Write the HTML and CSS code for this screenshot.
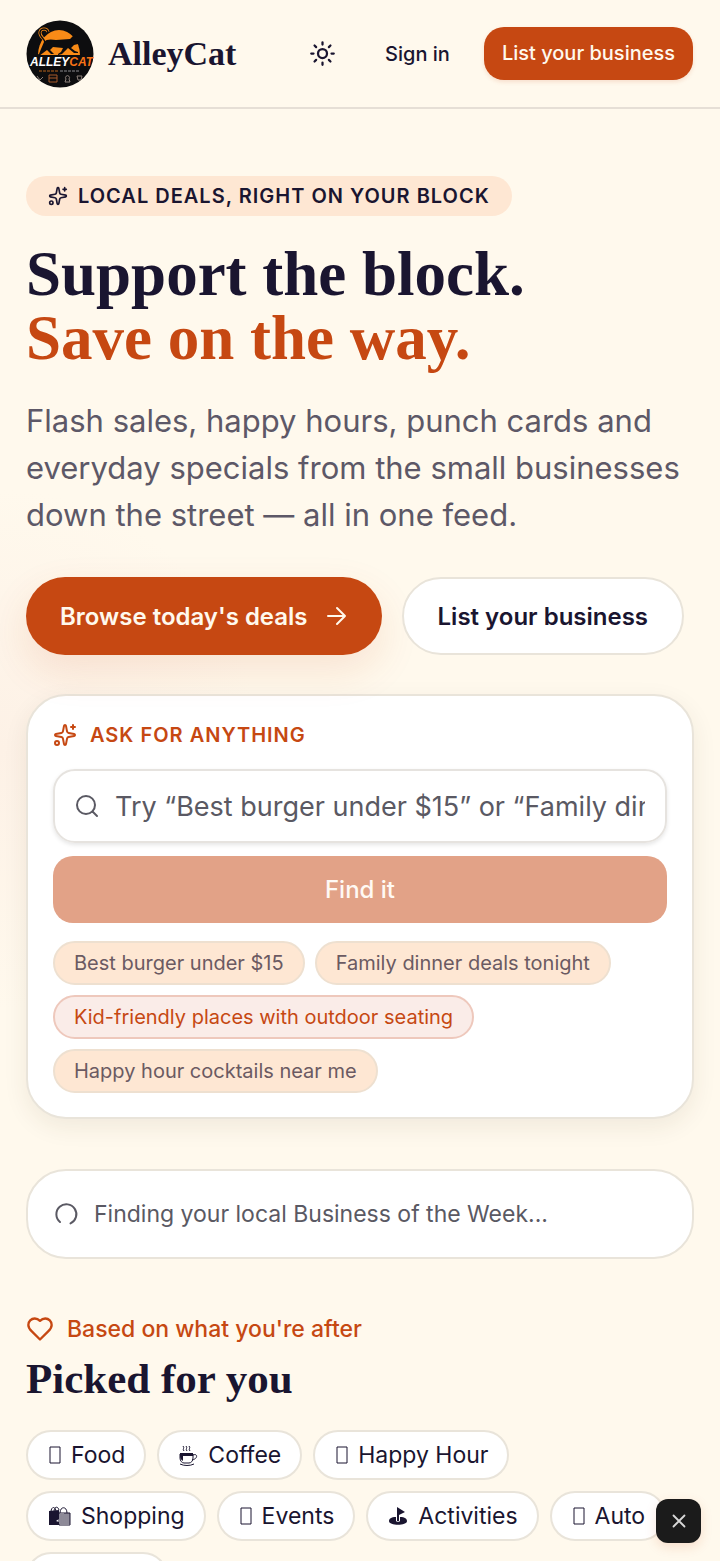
FILE: index.html
```
<!DOCTYPE html>
<html lang="en">
<head>
    <meta charset="UTF-8">
    <meta name="viewport" content="width=device-width, initial-scale=1.0">
    <title>AlleyCat</title>
    <link rel="stylesheet" href="styles.css">
</head>
<body>
    <header class="header">
        <a class="brand" href="#">
            <svg class="brand-logo" viewBox="0 0 68 68" role="img" aria-label="AlleyCat logo">
                <circle cx="34" cy="34" r="33.5" fill="#0d0d0f"/>
                <path d="M12 35a21 25 0 0 1 42 0z" fill="#f98b17"/>
                <path d="M22 12c-1-4-7-4-8 0-1 5 5 6 6 11" fill="none" stroke="#f98b17" stroke-width="3"/>
                <path d="M22 12c-1-4-7-4-8 0-1 5 5 6 5 11" fill="none" stroke="#0d0d0f" stroke-width="1.500" stroke-linecap="round"/>
                <path d="M18 22c2-3 7-3 12-2 5 0 9-1 14-1l3-3 1-1 1 2 3-1v3l1 3-1 2-4 1-3 3 4 3 3 1v1h-4l-6-5-3 3-3 3-4 1v-1l3-2 2-4-10-1-3 3 4 4h-3l-4-4-4 3-4 3-4 1 1-2 3-1 2-5z" fill="#0d0d0f"/>
                <text x="4" y="46" class="logo-word"><tspan fill="#fff">ALLEY</tspan><tspan fill="#f97316">CAT</tspan></text>
                <path d="M13 51h20" stroke="#b8641c" stroke-dasharray="3 1"/>
                <path d="M34 51h20" stroke="#8b8b8f" stroke-dasharray="3 1"/>
                <path d="M11 56l3 4 3-3M39 62h5l-1-3a2 2 0 1 0-3 0zM51 56h5l-1 4h-3z" fill="none" stroke="#8d817b"/>
                <path d="M23 55h8v7h-8zM23 58h8" fill="none" stroke="#a85b2a"/>
            </svg>
            <span class="brand-name">AlleyCat</span>
        </a>
        <nav class="nav">
            <button class="theme-toggle" type="button" aria-label="Toggle theme">
                <svg class="icon" viewBox="0 0 24 24"><circle cx="12" cy="12" r="4"/><path d="M12 2v2M12 20v2M4.930 4.930l1.410 1.410M17.660 17.660l1.410 1.410M2 12h2M20 12h2M6.340 17.660l-1.410 1.410M19.070 4.930l-1.410 1.410"/></svg>
            </button>
            <a class="sign-in" href="#">Sign in</a>
            <a class="header-cta" href="#">List your business</a>
        </nav>
    </header>

    <main class="main">
        <section class="hero">
            <p class="badge">
                <svg class="icon" viewBox="0 0 24 24"><path d="M11.017 2.814a1 1 0 0 1 1.966 0l1.051 5.558a2 2 0 0 0 1.594 1.594l5.558 1.051a1 1 0 0 1 0 1.966l-5.558 1.051a2 2 0 0 0-1.594 1.594l-1.051 5.558a1 1 0 0 1-1.966 0l-1.051-5.558a2 2 0 0 0-1.594-1.594l-5.558-1.051a1 1 0 0 1 0-1.966l5.558-1.051a2 2 0 0 0 1.594-1.594zM20 2v4M22 4h-4"/><circle cx="4" cy="20" r="2"/></svg>
                LOCAL DEALS, RIGHT ON YOUR BLOCK
            </p>
            <h1 class="hero-title">Support the block.<br><span class="accent">Save on the way.</span></h1>
            <p class="hero-text">Flash sales, happy hours, punch cards and everyday specials from the small businesses down the street — all in one feed.</p>
            <div class="hero-actions">
                <a class="btn btn-primary" href="#">
                    Browse today's deals
                    <svg class="icon" viewBox="0 0 24 24"><path d="M4 12h17M13 4l8 8-8 8"/></svg>
                </a>
                <a class="btn btn-outline" href="#">List your business</a>
            </div>
        </section>

        <form class="ask-card">
            <label class="ask-label" for="ask">
                <svg class="icon" viewBox="0 0 24 24"><path d="M11.017 2.814a1 1 0 0 1 1.966 0l1.051 5.558a2 2 0 0 0 1.594 1.594l5.558 1.051a1 1 0 0 1 0 1.966l-5.558 1.051a2 2 0 0 0-1.594 1.594l-1.051 5.558a1 1 0 0 1-1.966 0l-1.051-5.558a2 2 0 0 0-1.594-1.594l-5.558-1.051a1 1 0 0 1 0-1.966l5.558-1.051a2 2 0 0 0 1.594-1.594zM20 2v4M22 4h-4"/><circle cx="4" cy="20" r="2"/></svg>
                ASK FOR ANYTHING
            </label>
            <div class="search-box">
                <svg class="icon" viewBox="0 0 24 24"><circle cx="11" cy="11" r="9"/><path d="M22 22l-4.500-4.500"/></svg>
                <input id="ask" type="text" placeholder="Try “Best burger under $15” or “Family dinner deals tonight”">
            </div>
            <button class="find-btn" type="submit" disabled>Find it</button>
            <div class="suggestions">
                <button class="suggestion" type="button">Best burger under $15</button>
                <button class="suggestion" type="button">Family dinner deals tonight</button>
                <button class="suggestion active" type="button">Kid-friendly places with outdoor seating</button>
                <button class="suggestion" type="button">Happy hour cocktails near me</button>
            </div>
        </form>

        <div class="loading-card" role="status">
            <svg class="icon" viewBox="0 0 24 24"><path d="M5 20a10 10 0 1 1 10.500 1.400"/></svg>
            Finding your local Business of the Week...
        </div>

        <section class="picks">
            <p class="picks-label">
                <svg class="icon" viewBox="0 0 24 24"><path d="M19 14c1.490-1.460 3-3.210 3-5.500A5.500 5.500 0 0 0 16.500 3c-1.760 0-3 .5-4.500 2-1.500-1.500-2.740-2-4.500-2A5.500 5.500 0 0 0 2 8.500c0 2.300 1.500 4.050 3 5.500l7 7z"/></svg>
                Based on what you're after
            </p>
            <h2 class="picks-title">Picked for you</h2>
            <div class="categories">
                <button class="category" type="button">
                    <svg class="glyph" width="13" height="24"><path d="M2 4h10v16H2z"/></svg>
                    Food
                </button>
                <button class="category" type="button">
                    <svg class="glyph" width="19" height="24"><path d="M1 11h13v4c0 3-2 5-4 5H5c-2 0-4-2-4-5zM14 12c5-2 5 4-1 5M1 21c4 2 10 2 14 0M5 8c-2-2 1-3-1-5M8 8c-2-2 1-3-1-5M11 8c-2-2 1-3-1-5"/><path class="solid" d="M1 10h13v3H4v5c-2-1-3-3-3-5z"/></svg>
                    Coffee
                </button>
                <button class="category" type="button">
                    <svg class="glyph" width="13" height="24"><path d="M2 4h10v16H2z"/></svg>
                    Happy Hour
                </button>
                <button class="category" type="button">
                    <svg class="glyph" width="23" height="24"><path d="M3 8c0-6 5-6 5 0M6 8c0-6 4-6 5-2M12 9c0-7 7-7 7 0M13 10v10M15 10v10M17 9v11M19 9v11M21 9v11M11 9h11v12H11z"/><path class="solid" d="M1 7l10-1v9l-3 2 3 1v3H1z"/></svg>
                    Shopping
                </button>
                <button class="category" type="button">
                    <svg class="glyph" width="13" height="24"><path d="M2 4h10v16H2z"/></svg>
                    Events
                </button>
                <button class="category" type="button">
                    <svg class="glyph" width="20" height="24"><path class="solid" d="M9 3l8 5-6 3v6H9z"/><path class="solid" d="M8 13c-5 0-7 2-7 4 0 5 18 5 18 0 0-2-2-4-7-4v4c0 1-4 1-4 0z"/></svg>
                    Activities
                </button>
                <button class="category" type="button">
                    <svg class="glyph" width="13" height="24"><path d="M2 4h10v16H2z"/></svg>
                    Auto
                </button>
                <button class="category category-more" type="button" aria-label="More"></button>
            </div>
        </section>
    </main>

    <button class="close-btn" type="button" aria-label="Close">
        <svg class="icon" viewBox="0 0 24 24"><path d="M18 6L6 18M6 6l12 12"/></svg>
    </button>
</body>
</html>
```
FILE: styles.css
```
* {
    box-sizing: border-box;
}
body {
    margin: 0;
    height: 100vh;
    overflow: hidden;
    font-family: Inter, "Liberation Sans", sans-serif;
    font-size: 23px;
    color: #1a1530;
    background: radial-gradient(circle at 0 48%, #fdf1e6 0, #fff9ed 260px) #fff9ed;
}
h1, h2, p {
    margin: 0;
}
a {
    color: inherit;
    text-decoration: none;
}
button, input {
    font: inherit;
    color: inherit;
}
.icon {
    width: 24px;
    height: 24px;
    flex: none;
    fill: none;
    stroke: currentColor;
    stroke-width: 2;
    stroke-linecap: round;
    stroke-linejoin: round;
}
.header {
    display: flex;
    align-items: center;
    justify-content: space-between;
    height: 109px;
    padding: 0 27px 0 26px;
    background: #fff9ed;
    border-bottom: 2px solid #e6dfd6;
}
.brand {
    display: flex;
    align-items: center;
    gap: 14px;
}
.brand-logo {
    width: 68px;
    height: 68px;
}
.logo-word {
    font: italic bold 12px "Liberation Sans", sans-serif;
}
.brand-name {
    font: bold 34px "Liberation Serif", serif;
}
.nav {
    display: flex;
    align-items: center;
    font-size: 20px;
    font-weight: 500;
}
.theme-toggle {
    display: flex;
    padding: 13px;
    border: 0;
    background: none;
}
.theme-toggle .icon {
    width: 27px;
    height: 27px;
}
.sign-in {
    padding: 13px 34px 13px 36px;
}
.header-cta {
    padding: 14px 18px;
    line-height: 25px;
    color: #fff9ed;
    background: #c64812;
    border-radius: 20px;
    box-shadow: 0 2px 4px rgba(198, 72, 18, .15);
}
.main {
    padding: 67px 26px 0;
}
.badge {
    display: inline-flex;
    align-items: center;
    gap: 10px;
    padding: 7px 22px;
    font-size: 20px;
    font-weight: 600;
    line-height: 26px;
    letter-spacing: 1px;
    background: #fee7d3;
    border-radius: 20px;
}
.badge .icon {
    width: 20px;
    height: 20px;
}
.hero-title {
    margin-top: 26px;
    font: bold 63px/64px "Liberation Serif", serif;
}
.accent {
    color: #c64812;
}
.hero-text {
    margin-top: 27px;
    font-size: 31px;
    line-height: 47px;
    color: #5d5867;
}
.hero-actions {
    display: flex;
    gap: 20px;
    margin-top: 39px;
}
.btn {
    display: flex;
    align-items: center;
    gap: 16px;
    height: 78px;
    padding: 0 34px;
    font-size: 24px;
    font-weight: 600;
    border-radius: 39px;
}
.btn-primary {
    color: #fff9ed;
    background: #c64812;
    box-shadow: 0 16px 40px rgba(198, 72, 18, .12);
}
.btn-outline {
    background: #fff;
    border: 2px solid #e9e4da;
}
.ask-card {
    margin-top: 39px;
    padding: 25px 25px 24px;
    background: #fff;
    border: 2px solid #e9e4da;
    border-radius: 40px;
    box-shadow: 0 8px 24px rgba(60, 50, 20, .08);
}
.ask-label {
    display: flex;
    align-items: center;
    gap: 13px;
    font-size: 20px;
    font-weight: 600;
    line-height: 28px;
    letter-spacing: 1px;
    color: #c64812;
}
.search-box {
    display: flex;
    align-items: center;
    gap: 16px;
    height: 74px;
    margin-top: 20px;
    padding: 0 20px;
    color: #5a5963;
    border: 2px solid #e6e3df;
    border-radius: 22px;
    box-shadow: 0 2px 4px rgba(0, 0, 0, .1);
}
.search-box input {
    flex: 1;
    min-width: 0;
    padding: 0;
    font-size: 27px;
    border: 0;
    outline: 0;
    background: none;
}
.search-box input::placeholder {
    color: #5a5963;
    opacity: 1;
}
.find-btn {
    display: block;
    width: 100%;
    height: 67px;
    margin-top: 13px;
    font-size: 24px;
    font-weight: 500;
    color: #fff9f4;
    background: #e2a287;
    border: 0;
    border-radius: 20px;
}
.suggestions {
    display: flex;
    flex-wrap: wrap;
    gap: 10px;
    margin-top: 18px;
}
.suggestion {
    height: 44px;
    padding: 0 19px;
    font-size: 20px;
    color: #6b5a62;
    background: #fee7d3;
    border: 2px solid #eee0d0;
    border-radius: 22px;
}
.suggestion.active {
    color: #c64812;
    background: #faece8;
    border-color: #eec8bc;
}
.loading-card {
    display: flex;
    align-items: center;
    gap: 15px;
    height: 90px;
    margin-top: 50px;
    padding: 0 27px;
    color: #5a5963;
    background: #fff;
    border: 2px solid #e9e4da;
    border-radius: 40px;
}
.picks {
    margin-top: 53px;
}
.picks-label {
    display: flex;
    align-items: center;
    gap: 13px;
    line-height: 34px;
    font-weight: 500;
    color: #c64812;
}
.picks-label .icon {
    width: 28px;
    height: 28px;
}
.picks-title {
    font: bold 43px/66px "Liberation Serif", serif;
}
.categories {
    display: flex;
    flex-wrap: wrap;
    gap: 11px;
    margin-top: 18px;
}
.category {
    display: flex;
    align-items: center;
    gap: 10px;
    height: 50px;
    padding: 0 19px 0 20px;
    white-space: nowrap;
    background: #fff;
    border: 2px solid #e9e4da;
    border-radius: 25px;
}
.category-more {
    width: 142px;
}
.glyph {
    flex: none;
    fill: none;
    stroke: currentColor;
}
.glyph .solid {
    fill: currentColor;
    stroke: none;
}
.close-btn {
    position: fixed;
    right: 19px;
    bottom: 18px;
    display: grid;
    place-items: center;
    width: 45px;
    height: 44px;
    padding: 0;
    color: #d8d8d8;
    background: #1b1b1b;
    border: 0;
    border-radius: 12px;
    box-shadow: 0 4px 12px rgba(198, 72, 18, .15);
}
.close-btn .icon {
    width: 22px;
    height: 22px;
}
```
